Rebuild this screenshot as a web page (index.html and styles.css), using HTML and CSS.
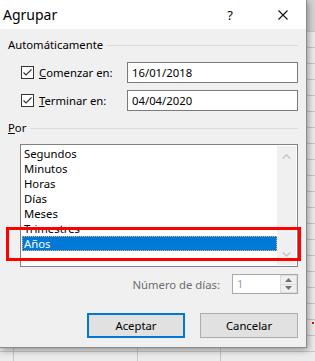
FILE: index.html
```html
<!DOCTYPE html>
<html lang="es">
<head>
    <meta charset="UTF-8">
    <title>Agrupar</title>
    <link rel="stylesheet" href="styles.css">
</head>
<body>
    <div class="screen">
        <div class="dialog">
            <div class="titlebar">
                <span class="title">Agrupar</span>
                <span class="help">?</span>
                <span class="close">
                    <svg width="10" height="10" viewBox="0 0 10 10"><path d="M0.5 0.5 L9.5 9.5 M9.5 0.5 L0.5 9.5" stroke="#111" stroke-width="1.1" fill="none"/></svg>
                </span>
            </div>
            <div class="body">
                <div class="group-head"><span>Automáticamente</span><span class="rule"></span></div>

                <div class="range-row first">
                    <label class="check">
                        <svg class="box" width="13" height="13" viewBox="0 0 13 13"><rect x="0.5" y="0.5" width="12" height="12" fill="#fff" stroke="#333"/><path d="M2.5 6.5 L5 9 L10.5 3.5" stroke="#333" stroke-width="1.2" fill="none"/></svg>
                        <span><u>C</u>omenzar en:</span>
                    </label>
                    <div class="field">16/01/2018</div>
                </div>
                <div class="range-row">
                    <label class="check">
                        <svg class="box" width="13" height="13" viewBox="0 0 13 13"><rect x="0.5" y="0.5" width="12" height="12" fill="#fff" stroke="#333"/><path d="M2.5 6.5 L5 9 L10.5 3.5" stroke="#333" stroke-width="1.2" fill="none"/></svg>
                        <span><u>T</u>erminar en:</span>
                    </label>
                    <div class="field">04/04/2020</div>
                </div>

                <div class="group-head second"><span><u>P</u>or</span><span class="rule"></span></div>

                <div class="listbox">
                    <ul class="items">
                        <li>Segundos</li>
                        <li>Minutos</li>
                        <li>Horas</li>
                        <li>Días</li>
                        <li>Meses</li>
                        <li>Trimestres</li>
                        <li class="selected">Años</li>
                    </ul>
                    <div class="scroll">
                        <svg width="9" height="5" viewBox="0 0 9 5"><path d="M0.7 4.5 L4.5 1 L8.3 4.5" stroke="#c4c4c4" stroke-width="1.5" fill="none"/></svg>
                        <svg width="9" height="5" viewBox="0 0 9 5"><path d="M0.7 0.5 L4.5 4 L8.3 0.5" stroke="#c4c4c4" stroke-width="1.5" fill="none"/></svg>
                    </div>
                </div>

                <div class="days-row">
                    <span class="days-label">Número de días:</span>
                    <div class="spin">
                        <span class="spin-value">1</span>
                        <div class="spin-buttons">
                            <span class="spin-up"><svg width="7" height="4" viewBox="0 0 7 4"><path d="M0 4 L3.5 0 L7 4 Z" fill="#707070"/></svg></span>
                            <span class="spin-down"><svg width="7" height="4" viewBox="0 0 7 4"><path d="M0 0 L3.5 4 L7 0 Z" fill="#707070"/></svg></span>
                        </div>
                    </div>
                </div>

                <div class="buttons">
                    <button class="btn primary">Aceptar</button>
                    <button class="btn">Cancelar</button>
                </div>
            </div>
        </div>
        <div class="highlight-mark"></div>
        <div class="red-dot"></div>
    </div>
</body>
</html>
```

FILE: styles.css
```css
* {
    box-sizing: border-box;
}
body {
    margin: 0;
    font-family: "Segoe UI", "Noto Sans", sans-serif;
    font-size: 11.3px;
    color: #000;
}
.screen {
    position: relative;
    width: 315px;
    height: 361px;
    overflow: hidden;
    background-color: #ebebeb;
    background-image:
        linear-gradient(to right, transparent 13px, #c4c4c4 13px, #c4c4c4 14px, transparent 14px),
        linear-gradient(to right, transparent 137px, #c4c4c4 137px, #c4c4c4 138px, transparent 138px),
        linear-gradient(to right, transparent 220px, #c4c4c4 220px, #c4c4c4 221px, transparent 221px),
        linear-gradient(#d4d4d4 0, #d4d4d4 31px, transparent 31px),
        repeating-linear-gradient(to bottom, transparent 0, transparent 15px, #c8c8c8 15px, #c8c8c8 16px);
}
.dialog {
    width: 307px;
    height: 348px;
    background: #f0f0f0;
    border-right: 1px solid #8a8a8a;
    border-bottom: 1px solid #8a8a8a;
    box-shadow: 1px 2px 7px rgba(0, 0, 0, 0.4);
}
.titlebar {
    display: flex;
    align-items: center;
    height: 29px;
    background: #fff;
}
.title {
    padding-left: 3px;
    font-size: 14px;
}
.help {
    margin-left: auto;
    width: 46px;
    text-align: center;
    font-size: 13px;
}
.close {
    display: flex;
    justify-content: center;
    align-items: center;
    width: 46px;
    margin-left: 7px;
}
.body {
    padding: 0 8px;
}
.group-head {
    display: flex;
    align-items: center;
    gap: 4px;
    height: 16px;
    margin-top: 8px;
    line-height: 16px;
}
.group-head.second {
    margin-top: 9px;
}
.rule {
    flex: 1;
    height: 1px;
    background: #dadada;
}
.range-row {
    display: flex;
    align-items: center;
    height: 21px;
    margin-top: 7px;
    padding-left: 13px;
}
.range-row.first {
    margin-top: 9px;
}
.check {
    display: flex;
    align-items: center;
    gap: 5px;
    width: 106px;
}
.box {
    flex: none;
}
.field {
    width: 171px;
    height: 21px;
    padding-left: 4px;
    line-height: 19px;
    background: #fff;
    border: 1px solid #7a7a7a;
}
.listbox {
    display: flex;
    height: 123px;
    margin: 8px 0 0 12px;
    padding: 1px;
    background: #fff;
    border: 1px solid #828282;
}
.items {
    flex: 1;
    margin: 0;
    padding: 0;
    list-style: none;
}
.items li {
    height: 15px;
    padding-left: 2px;
    line-height: 15px;
}
.items li.selected {
    background: #0078d7;
    color: #fff;
    outline: 1px dotted #f2b25c;
    outline-offset: -1px;
}
.scroll {
    display: flex;
    flex-direction: column;
    justify-content: space-between;
    align-items: center;
    width: 19px;
    padding: 8px 0 8px;
    background: #f0f0f0;
}
.days-row {
    display: flex;
    justify-content: flex-end;
    align-items: center;
    gap: 12px;
    height: 20px;
    margin-top: 7px;
}
.days-label {
    color: #6d6d6d;
}
.spin {
    display: flex;
    width: 66px;
    height: 20px;
    background: #fff;
    border: 1px solid #a8a8a8;
}
.spin-value {
    flex: 1;
    padding-left: 4px;
    line-height: 18px;
    color: #a0a0a0;
}
.spin-buttons {
    display: flex;
    flex-direction: column;
    width: 17px;
}
.spin-up, .spin-down {
    display: flex;
    justify-content: center;
    align-items: center;
    flex: 1;
    background: #f0f0f0;
    border: 1px solid #dcdcdc;
}
.spin-down {
    border-top: none;
}
.buttons {
    display: flex;
    justify-content: flex-end;
    gap: 15px;
    margin-top: 19px;
}
.btn {
    width: 98px;
    height: 25px;
    padding: 0;
    font-family: inherit;
    font-size: 11.3px;
    color: #000;
    background: #e1e1e1;
    border: 1px solid #adadad;
}
.btn.primary {
    border: 2px solid #0078d7;
}
.highlight-mark {
    position: absolute;
    left: 6px;
    top: 227px;
    width: 295px;
    height: 34px;
    border: 3px solid #f00;
}
.red-dot {
    position: absolute;
    left: 312px;
    top: 322px;
    width: 2px;
    height: 2px;
    background: #e00;
}
```
